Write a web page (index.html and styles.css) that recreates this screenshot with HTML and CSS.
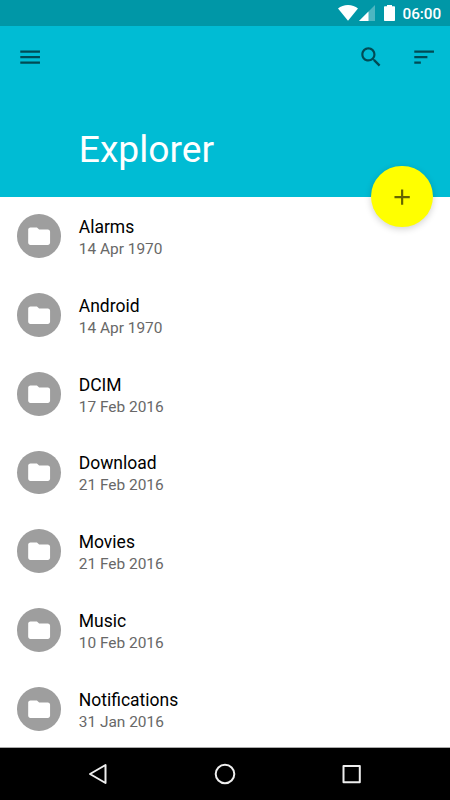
FILE: index.html
```html
<!DOCTYPE html>
<html lang="en">
<head>
  <meta charset="utf-8">
  <title>Explorer</title>
  <link rel="stylesheet" href="styles.css">
</head>
<body>
  <div class="screen">
    <div class="status-bar">
      <svg class="wifi" width="20" height="16" viewBox="0 0 20 16"><path d="M10 15.800L0 3.400C2.700 1.300 6.100 0 10 0s7.300 1.300 10 3.400z"/></svg>
      <svg class="signal" width="16" height="16" viewBox="0 0 16 16"><path opacity=".3" d="M0 16L16 0v16z"/><path d="M0 16L9.500 6.500V16z"/></svg>
      <svg class="battery" width="11" height="16" viewBox="0 0 11 16"><path d="M3 0h5v1.200H10c.6 0 1 .4 1 1V15c0 .6-.4 1-1 1H1c-.6 0-1-.4-1-1V2.200c0-.6.4-1 1-1h2z"/></svg>
      <span class="clock">06:00</span>
    </div>

    <header class="header">
      <div class="toolbar">
        <svg class="icon" viewBox="0 0 24 24"><path d="M3 18h18v-2H3v2zm0-5h18v-2H3v2zm0-7v2h18V6H3z"/></svg>
        <div class="actions">
          <svg class="icon" viewBox="0 0 24 24"><path d="M15.500 14h-.79l-.28-.27C15.410 12.590 16 11.110 16 9.500 16 5.910 13.090 3 9.500 3S3 5.910 3 9.500 5.910 16 9.500 16c1.610 0 3.090-.59 4.230-1.570l.27.28v.79l5 4.990L20.490 19l-4.990-5zm-6 0C7.010 14 5 11.990 5 9.500S7.010 5 9.500 5 14 7.010 14 9.500 11.990 14 9.500 14z"/></svg>
          <svg class="icon" viewBox="0 0 24 24"><path d="M3 18h6v-2H3v2zM3 6v2h18V6H3zm0 7h12v-2H3v2z"/></svg>
        </div>
      </div>
      <h1>Explorer</h1>
      <div class="fab">
        <svg class="icon" viewBox="0 0 24 24"><path d="M19 13h-6v6h-2v-6H5v-2h6V5h2v6h6v2z"/></svg>
      </div>
    </header>

    <ul class="list" id="list"></ul>

    <div class="nav-bar">
      <svg width="20" height="22" viewBox="0 0 20 22"><path d="M17.500 2v18L2 11z"/></svg>
      <svg width="22" height="22" viewBox="0 0 22 22"><circle cx="11" cy="11" r="9.300"/></svg>
      <svg width="20" height="20" viewBox="0 0 20 20"><rect x="1.500" y="2" width="16.300" height="16.300"/></svg>
    </div>
  </div>

  <script>
    const folders = [
      { name: 'Alarms', date: '14 Apr 1970' },
      { name: 'Android', date: '14 Apr 1970' },
      { name: 'DCIM', date: '17 Feb 2016' },
      { name: 'Download', date: '21 Feb 2016' },
      { name: 'Movies', date: '21 Feb 2016' },
      { name: 'Music', date: '10 Feb 2016' },
      { name: 'Notifications', date: '31 Jan 2016' }
    ];

    document.getElementById('list').innerHTML = folders.map(folder => `
      <li class="row">
        <span class="avatar">
          <svg class="icon" viewBox="0 0 24 24"><path d="M10 4H4c-1.100 0-1.990.9-1.990 2L2 18c0 1.100.9 2 2 2h16c1.100 0 2-.9 2-2V8c0-1.100-.9-2-2-2h-8l-2-2z"/></svg>
        </span>
        <div class="text">
          <div class="name">${folder.name}</div>
          <div class="date">${folder.date}</div>
        </div>
      </li>
    `).join('');
  </script>
</body>
</html>
```

FILE: styles.css
```css
* { box-sizing: border-box; }
body { margin: 0; font-family: Roboto, sans-serif; }
svg { display: block; flex: none; }
.screen {
  display: flex;
  flex-direction: column;
  width: 450px;
  height: 800px;
  overflow: hidden;
  background: #fff;
}

.status-bar {
  display: flex;
  align-items: center;
  justify-content: flex-end;
  flex: none;
  height: 26.25px;
  padding-right: 8.75px;
  background: #0097a7;
  color: #fff;
}
.status-bar svg { fill: #fff; }
.signal { margin-left: 1.5px; }
.battery { margin-left: 8.5px; }
.clock {
  margin-left: 7.5px;
  padding-top: 1px;
  font-size: 15.3px;
  font-weight: 500;
}

.header {
  position: relative;
  flex: none;
  height: 170.6px;
  background: #00bcd4;
}
.toolbar {
  display: flex;
  align-items: center;
  justify-content: space-between;
  height: 61px;
  padding: 0 13.1px 0 17.4px;
}
.actions { display: flex; gap: 26.25px; }
.icon {
  width: 26.25px;
  height: 26.25px;
  fill: rgba(0, 0, 0, 0.6);
}
h1 {
  margin: 0;
  padding: 39.5px 0 0 78.75px;
  color: #fff;
  font-size: 37.2px;
  font-weight: 400;
  line-height: 44px;
}
.fab {
  position: absolute;
  right: 17.5px;
  bottom: -30.6px;
  display: flex;
  align-items: center;
  justify-content: center;
  width: 61.25px;
  height: 61.25px;
  border-radius: 50%;
  background: #ff0;
  box-shadow: 0 2px 7px rgba(0, 0, 0, 0.18);
}

.list { flex: 1; min-height: 0; margin: 0; padding: 0; list-style: none; }
.row {
  display: flex;
  align-items: center;
  height: 78.75px;
  padding-left: 17.4px;
}
.avatar {
  display: flex;
  align-items: center;
  justify-content: center;
  width: 43.75px;
  height: 43.75px;
  margin-right: 17.6px;
  border-radius: 50%;
  background: #9e9e9e;
}
.avatar .icon { fill: #fff; }
.text { padding-top: 4px; }
.name { color: #000; font-size: 17.5px; line-height: 22px; }
.date { color: #686868; font-size: 15.45px; line-height: 22px; }

.nav-bar {
  display: flex;
  align-items: center;
  justify-content: center;
  gap: 106px;
  flex: none;
  height: 53px;
  border-top: 1px solid #aaa;
  background: #000;
}
.nav-bar svg {
  fill: none;
  stroke: #eee;
  stroke-width: 2;
  stroke-linejoin: round;
}
```
